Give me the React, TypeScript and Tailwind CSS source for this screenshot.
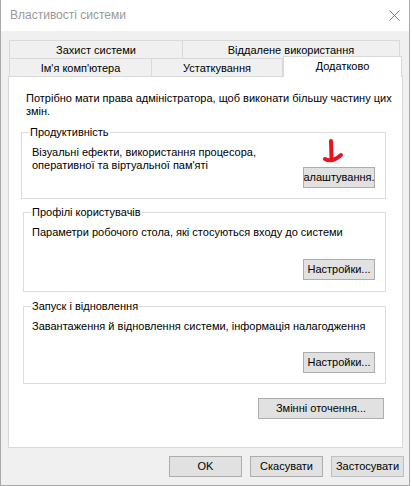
import React from "react";

const font = { fontFamily: '"Liberation Sans", Arial, sans-serif' };

function Btn({ children, className = "" }: { children: React.ReactNode; className?: string }) {
  return (
    <div
      className={`flex items-center justify-center overflow-hidden whitespace-nowrap border border-[#adadad] bg-[#e1e1e1] text-[11px] leading-[13px] text-black ${className}`}
    >
      {children}
    </div>
  );
}

function Group({ title, className, children }: { title: string; className: string; children: React.ReactNode }) {
  return (
    <div className={`relative border border-[#dcdcdc] ${className}`}>
      <span className="absolute -top-[7px] left-[7px] bg-white px-[1px] leading-[13px]">{title}</span>
      {children}
    </div>
  );
}

export default function App() {
  return (
    <div className="h-[486px] w-[412px] bg-white text-[11px] leading-[13px] text-black" style={font}>
      <div className="flex h-[486px] w-[410px] flex-col border-x border-b border-[#a9a9a9] bg-[#f0f0f0]">
        {/* title bar */}
        <div className="flex h-[31px] shrink-0 items-center justify-between bg-white pl-[9px] pr-[8px]">
          <span className="text-[12px] text-[#999999]">Властивості системи</span>
          <svg width="11" height="11" viewBox="0 0 11 11" className="mr-[1px]">
            <path d="M0.5 0.5 L10.5 10.5 M10.5 0.5 L0.5 10.5" stroke="#7a7a7a" strokeWidth="1" fill="none" />
          </svg>
        </div>

        {/* tabs */}
        <div className="ml-[7px] mt-[9px] flex flex-col">
          <div className="ml-[1px] flex h-[18px]">
            <div className="flex w-[174px] items-center justify-center border border-b-0 border-[#d9d9d9] pt-[1px]">Захист системи</div>
            <div className="flex w-[217px] items-center justify-center border border-b-0 border-l-0 border-[#d9d9d9] pt-[1px]">
              Віддалене використання
            </div>
          </div>
          <div className="relative z-10 -mb-[1px] flex h-[19px] items-end">
            <div className="ml-[1px] flex h-[19px] w-[143px] items-center justify-center border border-b-0 border-[#d9d9d9]">
              Ім'я комп'ютера
            </div>
            <div className="flex h-[19px] w-[131px] items-center justify-center border border-b-0 border-l-0 border-[#d9d9d9]">
              Устаткування
            </div>
            <div className="flex h-[21px] w-[119px] items-center justify-center border border-b-0 border-[#d9d9d9] bg-white pb-[2px]">
              Додатково
            </div>
          </div>
        </div>

        {/* tab panel */}
        <div className="relative ml-[7px] flex h-[372px] w-[395px] flex-col border border-[#d9d9d9] bg-white">
          <p className="ml-[17px] mt-[15px] whitespace-nowrap">
            Потрібно мати права адміністратора, щоб виконати більшу частину цих
            <br />
            змін.
          </p>

          <Group title="Продуктивність" className="ml-[12px] mt-[14px] h-[67px] w-[365px]">
            <div className="flex items-start pl-[10px] pr-[10px] pt-[13px]">
              <p className="whitespace-nowrap">
                Візуальні ефекти, використання процесора,
                <br />
                оперативної та віртуальної пам'яті
              </p>
              <Btn className="ml-auto mt-[21px] h-[21px] w-[72px]">алаштування.</Btn>
            </div>
          </Group>

          <Group title="Профілі користувачів" className="ml-[14px] mt-[13px] h-[80px] w-[363px]">
            <div className="flex flex-col pl-[8px] pr-[10px] pt-[13px]">
              <p className="whitespace-nowrap">Параметри робочого стола, які стосуються входу до системи</p>
              <Btn className="ml-auto mt-[20px] h-[21px] w-[72px]">Настройки...</Btn>
            </div>
          </Group>

          <Group title="Запуск і відновлення" className="ml-[14px] mt-[14px] h-[78px] w-[363px]">
            <div className="flex flex-col pl-[8px] pr-[10px] pt-[13px]">
              <p className="whitespace-nowrap">Завантаження й відновлення системи, інформація налагодження</p>
              <Btn className="ml-auto mt-[19px] h-[21px] w-[72px]">Настройки...</Btn>
            </div>
          </Group>

          <div className="mt-[14px] flex justify-end pr-[18px]">
            <Btn className="h-[21px] w-[126px]">Змінні оточення...</Btn>
          </div>

          {/* red hand-drawn arrow annotation */}
          <svg className="absolute left-[301px] top-[61px]" width="40" height="30" viewBox="310 138 40 30">
            <path d="M331 141 L331.5 158" stroke="#e8141c" strokeWidth="4" strokeLinecap="round" fill="none" />
            <path d="M325 159 Q332 163 341 155" stroke="#e8141c" strokeWidth="4" strokeLinecap="round" fill="none" />
          </svg>
        </div>

        {/* dialog buttons */}
        <div className="mt-[8px] flex justify-end gap-[8px] pr-[5px]">
          <Btn className="h-[21px] w-[73px]">OK</Btn>
          <Btn className="h-[21px] w-[73px]">Скасувати</Btn>
          <Btn className="h-[21px] w-[73px] border-[#bfbfbf] bg-[#cccccc] text-[#838383]">Застосувати</Btn>
        </div>
      </div>
    </div>
  );
}
